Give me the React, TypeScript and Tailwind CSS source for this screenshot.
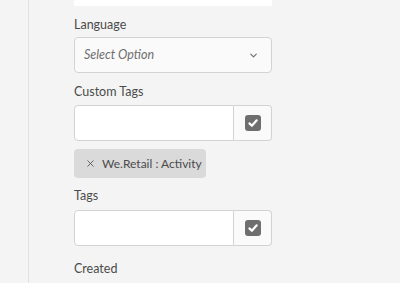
import { ChevronDown, X } from 'lucide-react'

function CheckBox() {
  return (
    <div className="w-[16px] h-[16px] rounded-[3px] bg-[#6e6e6e] flex items-center justify-center">
      <svg width="12" height="12" viewBox="0 0 12 12">
        <path d="M2.4 6.4 L4.9 8.8 L9.7 3.3" fill="none" stroke="white" strokeWidth="2.2" strokeLinecap="round" strokeLinejoin="round" />
      </svg>
    </div>
  )
}

function TagInput() {
  return (
    <div className="flex h-[36px] w-[198px]">
      <div className="flex-1 bg-white border border-[#d3d3d3] rounded-l-[4px]" />
      <div className="w-[38px] bg-[#fafafa] border border-l-0 border-[#d3d3d3] rounded-r-[4px] flex items-center justify-center">
        <CheckBox />
      </div>
    </div>
  )
}

export default function App() {
  return (
    <div className="w-[400px] h-[283px] bg-[#f4f4f4] flex overflow-hidden text-[#4b4b4b]" style={{ fontFamily: 'Lato, sans-serif' }}>
      <div className="w-[29px] shrink-0 border-r border-[#e1e1e1]" />
      <div className="pl-[45px] flex flex-col">
        <div className="w-[198px] h-[6px] bg-white" />

        <label className="mt-[10px] text-[12.5px] leading-[18px] mb-[3px]">Language</label>
        <div className="w-[198px] h-[36px] bg-[#fafafa] border border-[#d3d3d3] rounded-[4px] flex items-center justify-between pl-[9px] pr-[12px]">
          <span className="italic text-[12.5px] text-[#6e6e6e]">Select Option</span>
          <ChevronDown className="w-[11px] h-[11px] text-[#6e6e6e]" strokeWidth={2.5} />
        </div>

        <label className="mt-[10px] text-[12.5px] leading-[18px] mb-[4px]">Custom Tags</label>
        <TagInput />

        <div className="mt-[8px] w-[132px] h-[29px] bg-[#dadada] rounded-[4px] flex items-center pl-[11px] gap-[6px] text-[12px] text-[#4b4b4b] whitespace-nowrap">
          <X className="w-[11px] h-[11px] shrink-0" strokeWidth={1.8} />
          <span>We.Retail : Activity</span>
        </div>

        <label className="mt-[9px] text-[12.5px] leading-[18px] mb-[5px]">Tags</label>
        <TagInput />

        <label className="mt-[14px] text-[12.5px] leading-[18px]">Created</label>
      </div>
    </div>
  )
}
